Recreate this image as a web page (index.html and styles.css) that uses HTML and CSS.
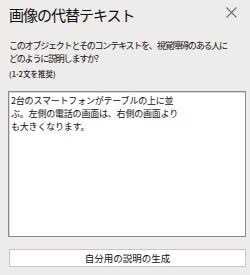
FILE: index.html
```html
<!DOCTYPE html>
<html lang="ja">
<head>
<meta charset="utf-8">
<link rel="stylesheet" href="styles.css">
</head>
<body>
<div class="pane">
  <div class="header">
    <h1 class="title">画像の代替テキスト</h1>
    <svg class="close" width="11" height="11" viewBox="0 0 11 11"><path d="M0.5 0.5L10.5 10.5M10.5 0.5L0.5 10.5" stroke="#707070" stroke-width="1.1" fill="none"/></svg>
  </div>
  <p class="question">このオブジェクトとそのコンテキストを、視覚障碍のある人に<br>どのように説明しますか?</p>
  <p class="hint">(1-2文を推奨)</p>
  <div class="textbox">
    <div class="tb-line">2台のスマートフォンがテーブルの上に並</div>
    <div class="tb-line">ぶ。左側の電話の画面は、右側の画面より</div>
    <div class="tb-line">も大きくなります。</div>
  </div>
  <button class="gen">自分用の説明の生成</button>
</div>
</body>
</html>
```
FILE: styles.css
```css
html, body {
  margin: 0;
  padding: 0;
  background: #edecea;
}
body {
  width: 250px;
  height: 275px;
  overflow: hidden;
  font-family: "Noto Sans CJK JP", "Noto Sans", sans-serif;
  color: #111;
}
.pane {
  display: flex;
  flex-direction: column;
  padding: 0 4px 0 8px;
}
.header {
  display: flex;
  justify-content: space-between;
  align-items: flex-start;
  height: 39px;
}
.title {
  margin: 5px 0 0 1px;
  font-size: 15px;
  font-weight: 400;
  line-height: 20px;
  letter-spacing: -1px;
  color: #111;
}
.close {
  margin: 7px 9px 0 0;
}
.question {
  margin: 0 0 0 1px;
  font-size: 9px;
  line-height: 13px;
  letter-spacing: -1.2px;
}
.hint {
  margin: 4px 0 0 1px;
  font-size: 7.5px;
  line-height: 10px;
  font-weight: 500;
  color: #222;
}
.textbox {
  margin-top: 12px;
  height: 140px;
  background: #fff;
  border: 1px solid #8a8a8a;
  box-shadow: inset 1px 1px 0 #d8d8d8;
  padding: 2px 2px;
  font-size: 9px;
  line-height: 13px;
  letter-spacing: -0.2px;
}
.gen {
  margin: 12px 0 0 1px;
  height: 18px;
  background: #fff;
  border: 1px solid #c6c6c6;
  font-family: "Noto Sans CJK JP", "Noto Sans", sans-serif;
  font-size: 9.5px;
  line-height: 14px;
  padding: 0;
  color: #111;
}
```
